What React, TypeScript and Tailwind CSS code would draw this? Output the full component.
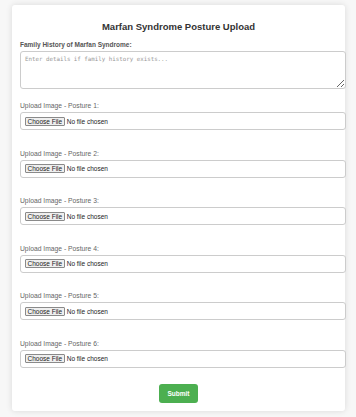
import React from "react";

const postures = [1, 2, 3, 4, 5, 6];

export default function App() {
  return (
    <div className="min-h-screen bg-[#f7f7f7] pt-[5px] pl-[12px] font-['Liberation_Sans',Arial,sans-serif]">
      <div className="w-[333px] h-[406px] bg-white rounded-[3px] shadow-[0_0_6px_rgba(0,0,0,0.12)] px-[8px] pt-[16px]">
        <h1 className="text-center text-[9.5px] leading-[12px] font-bold text-[#333]">
          Marfan Syndrome Posture Upload
        </h1>

        {/* family history */}
        <label className="block mt-[8px] text-[6.5px] leading-[8px] font-bold text-[#555]">
          Family History of Marfan Syndrome:
        </label>
        <textarea
          className="block mt-[2px] w-[326px] h-[38px] border border-[#ccc] rounded-[3px] px-[4px] py-[3px] font-['DejaVu_Sans_Mono','Liberation_Mono',monospace] text-[5.8px] leading-[8px] placeholder:text-[#999] outline-none"
          placeholder="Enter details if family history exists..."
        />

        {postures.map((n, i) => (
          <div key={n} className={i === 0 ? "mt-[13px]" : "mt-[19.5px]"}>
            <label className="block text-[6.75px] leading-[8px] text-[#666]">
              Upload Image - Posture {n}:
            </label>
            <div className="mt-[2px] w-[326px] h-[18px] border border-[#ccc] rounded-[3px] px-[4px] flex items-center">
              <input
                type="file"
                accept="image/*"
                className="text-[6.5px] leading-[9px] text-[#222] file:h-[9px] file:px-[1.5px] file:mr-[2px] file:border file:border-[#8a8a8a] file:rounded-[1px] file:bg-[#efefef] file:text-[#222] file:leading-[7px]"
              />
            </div>
          </div>
        ))}

        <div className="flex justify-center mt-[16.5px]">
          <button className="w-[39px] h-[19px] bg-[#4caf50] rounded-[3px] text-white text-[6.5px] font-bold">
            Submit
          </button>
        </div>
      </div>
    </div>
  );
}
